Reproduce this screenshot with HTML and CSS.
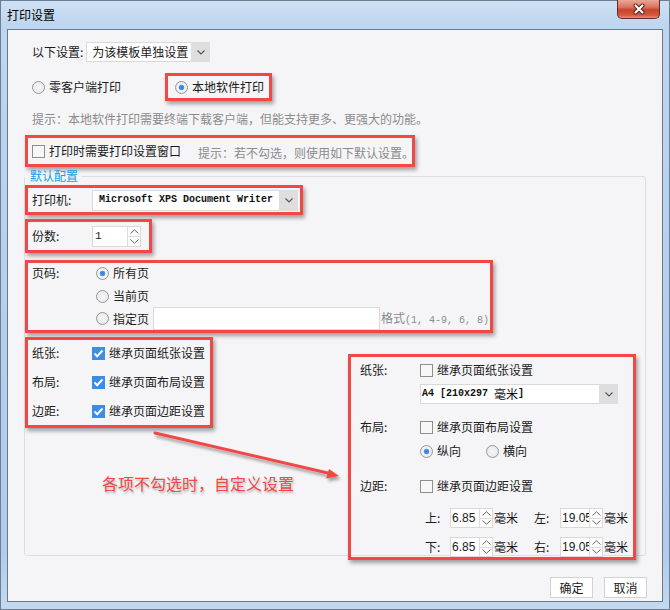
FILE: index.html
```html
<!DOCTYPE html>
<html>
<head>
	<meta charset="UTF-8">
	<meta name="viewport" content="width=device-width, initial-scale=1">
	<title>打印设置</title>
	<link rel="stylesheet" href="styles.css">
</head>
<body>

	<div class="window">
		<div class="titlebar">
			<span class="title">打印设置</span>
			<span class="close">
				<svg width="14" height="12" viewBox="0 0 14 12"><path d="M3.5 2.5 L10.5 9.5 M10.5 2.5 L3.5 9.5" stroke="#4a1c17" stroke-width="4" stroke-linecap="round"/><path d="M3.5 2.5 L10.5 9.5 M10.5 2.5 L3.5 9.5" stroke="#fff" stroke-width="2.2" stroke-linecap="round"/></svg>
			</span>
		</div>

		<div class="client">
			<!-- scope -->
			<div class="row-scope">
				<span class="lbl">以下设置:</span>
				<span class="select select-scope">
					<span class="select-text">为该模板单独设置</span>
					<span class="select-arrow"><svg width="8" height="5" viewBox="0 0 8 5"><polyline points="0.5,0.5 4,4 7.5,0.5" fill="none" stroke="#555" stroke-width="1.1"/></svg></span>
				</span>
			</div>

			<!-- print mode -->
			<div class="row-mode">
				<span class="opt"><span class="radio"></span>零客户端打印</span>
				<span class="mark mark-local"><span class="opt"><span class="radio on"></span>本地软件打印</span></span>
			</div>
			<p class="hint hint-mode">提示：本地软件打印需要终端下载客户端，但能支持更多、更强大的功能。</p>

			<div class="mark mark-dialog">
				<span class="opt"><span class="check"></span>打印时需要打印设置窗口</span>
				<span class="hint hint-dialog">提示：若不勾选，则使用如下默认设置。</span>
			</div>

			<!-- defaults -->
			<fieldset class="defaults">
				<legend>默认配置</legend>

				<div class="mark mark-printer">
					<span class="field-lbl">打印机:</span>
					<span class="select select-printer">
						<span class="select-text mono">Microsoft XPS Document Writer</span>
						<span class="select-arrow"><svg width="8" height="5" viewBox="0 0 8 5"><polyline points="0.5,0.5 4,4 7.5,0.5" fill="none" stroke="#555" stroke-width="1.1"/></svg></span>
					</span>
				</div>

				<div class="mark mark-copies">
					<span class="field-lbl">份数:</span>
					<span class="spin spin-copies">
						<span class="spin-text copies-val">1</span>
						<span class="spin-btns">
							<span class="spin-up"><svg width="9" height="5" viewBox="0 0 9 5"><polyline points="0.5,4.5 4.5,0.8 8.5,4.5" fill="none" stroke="#666" stroke-width="1"/></svg></span>
							<span class="spin-down"><svg width="9" height="5" viewBox="0 0 9 5"><polyline points="0.5,0.5 4.5,4.2 8.5,0.5" fill="none" stroke="#666" stroke-width="1"/></svg></span>
						</span>
					</span>
				</div>

				<div class="mark mark-pages">
					<span class="field-lbl pages-lbl">页码:</span>
					<div class="page-opts">
						<div class="page-row"><span class="radio on"></span>所有页</div>
						<div class="page-row row-current"><span class="radio"></span>当前页</div>
						<div class="page-row row-range">
							<span class="radio"></span>指定页
							<span class="range-input"></span>
							<span class="range-fmt">格式<span class="mono">(1, 4-9, 6, 8)</span></span>
						</div>
					</div>
				</div>

				<div class="lower">
					<div class="lower-left">
						<div class="mark mark-inherit">
							<div class="inherit-row"><span class="field-lbl">纸张:</span><span class="check on"><svg width="11" height="9" viewBox="0 0 11 9"><polyline points="1.5,4.5 4.2,7.2 9.5,1.5" fill="none" stroke="#fff" stroke-width="2"/></svg></span>继承页面纸张设置</div>
							<div class="inherit-row"><span class="field-lbl">布局:</span><span class="check on"><svg width="11" height="9" viewBox="0 0 11 9"><polyline points="1.5,4.5 4.2,7.2 9.5,1.5" fill="none" stroke="#fff" stroke-width="2"/></svg></span>继承页面布局设置</div>
							<div class="inherit-row"><span class="field-lbl">边距:</span><span class="check on"><svg width="11" height="9" viewBox="0 0 11 9"><polyline points="1.5,4.5 4.2,7.2 9.5,1.5" fill="none" stroke="#fff" stroke-width="2"/></svg></span>继承页面边距设置</div>
						</div>
						<p class="note">各项不勾选时，自定义设置</p>
					</div>

					<div class="mark mark-custom">
						<div class="custom-row"><span class="field-lbl">纸张:</span><span class="check"></span>继承页面纸张设置</div>
						<span class="select select-paper">
							<span class="select-text"><span class="mono">A4 [210x297&nbsp;</span>毫米<span class="mono">]</span></span>
							<span class="select-arrow"><svg width="8" height="5" viewBox="0 0 8 5"><polyline points="0.5,0.5 4,4 7.5,0.5" fill="none" stroke="#555" stroke-width="1.1"/></svg></span>
						</span>
						<div class="custom-row row-layout"><span class="field-lbl">布局:</span><span class="check"></span>继承页面布局设置</div>
						<div class="orient">
							<span class="opt"><span class="radio on"></span>纵向</span>
							<span class="opt opt-land"><span class="radio"></span>横向</span>
						</div>
						<div class="custom-row row-margin"><span class="field-lbl">边距:</span><span class="check"></span>继承页面边距设置</div>

						<div class="margin-row">
							<span class="m-lbl">上:</span>
							<span class="spin spin-m"><span class="spin-text">6.85</span><span class="spin-btns"><span class="spin-up"><svg width="9" height="5" viewBox="0 0 9 5"><polyline points="0.5,4.5 4.5,0.8 8.5,4.5" fill="none" stroke="#666" stroke-width="1"/></svg></span><span class="spin-down"><svg width="9" height="5" viewBox="0 0 9 5"><polyline points="0.5,0.5 4.5,4.2 8.5,0.5" fill="none" stroke="#666" stroke-width="1"/></svg></span></span></span>
							<span class="unit">毫米</span>
							<span class="m-lbl m-lbl-r">左:</span>
							<span class="spin spin-m"><span class="spin-text">19.05</span><span class="spin-btns"><span class="spin-up"><svg width="9" height="5" viewBox="0 0 9 5"><polyline points="0.5,4.5 4.5,0.8 8.5,4.5" fill="none" stroke="#666" stroke-width="1"/></svg></span><span class="spin-down"><svg width="9" height="5" viewBox="0 0 9 5"><polyline points="0.5,0.5 4.5,4.2 8.5,0.5" fill="none" stroke="#666" stroke-width="1"/></svg></span></span></span>
							<span class="unit">毫米</span>
						</div>
						<div class="margin-row row-bottom">
							<span class="m-lbl">下:</span>
							<span class="spin spin-m"><span class="spin-text">6.85</span><span class="spin-btns"><span class="spin-up"><svg width="9" height="5" viewBox="0 0 9 5"><polyline points="0.5,4.5 4.5,0.8 8.5,4.5" fill="none" stroke="#666" stroke-width="1"/></svg></span><span class="spin-down"><svg width="9" height="5" viewBox="0 0 9 5"><polyline points="0.5,0.5 4.5,4.2 8.5,0.5" fill="none" stroke="#666" stroke-width="1"/></svg></span></span></span>
							<span class="unit">毫米</span>
							<span class="m-lbl m-lbl-r">右:</span>
							<span class="spin spin-m"><span class="spin-text">19.05</span><span class="spin-btns"><span class="spin-up"><svg width="9" height="5" viewBox="0 0 9 5"><polyline points="0.5,4.5 4.5,0.8 8.5,4.5" fill="none" stroke="#666" stroke-width="1"/></svg></span><span class="spin-down"><svg width="9" height="5" viewBox="0 0 9 5"><polyline points="0.5,0.5 4.5,4.2 8.5,0.5" fill="none" stroke="#666" stroke-width="1"/></svg></span></span></span>
							<span class="unit">毫米</span>
						</div>
					</div>
				</div>
			</fieldset>

			<div class="actions">
				<button class="btn">确定</button>
				<button class="btn">取消</button>
			</div>
		</div>
	</div>

	<!-- annotation arrow -->
	<svg class="arrow" width="670" height="610" viewBox="0 0 670 610">
		<defs>
			<filter id="shadow" x="-10%" y="-50%" width="120%" height="200%">
				<feDropShadow dx="2" dy="3" stdDeviation="1.6" flood-color="#000" flood-opacity="0.35"/>
			</filter>
		</defs>
		<g filter="url(#shadow)">
			<line x1="155" y1="433" x2="330" y2="473.5" stroke="#f24747" stroke-width="3" stroke-linecap="round"/>
			<polygon points="339,476 326,478.5 329,469" fill="#f24747"/>
		</g>
	</svg>

</body>
</html>
```

FILE: styles.css
```css
body {
	margin: 0;
	width: 670px;
	height: 610px;
	overflow: hidden;
	position: relative;
	font-family: "Noto Sans CJK SC", "Liberation Sans", sans-serif;
	font-size: 12px;
	line-height: 16px;
	white-space: nowrap;
	color: #1b1b1b;
	background: #b9d1ec;
}
p {
	margin: 0;
}
.mono {
	font-family: "Liberation Mono", monospace;
	font-size: 10px;
}

/* WINDOW FRAME */
.window {
	box-sizing: border-box;
	height: 610px;
	padding: 0 7px 8px 7px;
	background: linear-gradient(to bottom, #cfe1f3 0%, #bed6ef 4%, #b6cfeb 50%, #b1cbe9 90%, #c3d9f0 100%);
	box-shadow: inset 0 0 0 1px #6c7e94;
}
.titlebar {
	height: 29px;
	display: flex;
	justify-content: space-between;
	align-items: flex-start;
}
.title {
	padding-top: 7px;
	color: #000;
}
.close {
	width: 43px;
	height: 19px;
	margin-right: 3px;
	box-sizing: border-box;
	display: flex;
	align-items: center;
	justify-content: center;
	border: 1px solid #6b2b22;
	border-top: none;
	border-radius: 0 0 5px 5px;
	background: linear-gradient(to bottom, #e9a899 0%, #d9735f 40%, #c8432c 55%, #d45b3f 85%, #e4907a 100%);
}

/* Client area */
.client {
	box-sizing: border-box;
	height: 573px;
	padding: 0 16px;
	border: 1px solid #6a7a8d;
	background: #f5f5f7;
}

/* RED ANNOTATION BOXES */
.mark {
	box-sizing: border-box;
	border: 3px solid #f24747;
	box-shadow: 2px 3px 4px rgba(0,0,0,0.35);
}

/* common controls */
.opt {
	display: flex;
	align-items: center;
	flex: none;
}
.radio {
	box-sizing: border-box;
	width: 13px;
	height: 13px;
	flex: none;
	margin-right: 4px;
	border: 1px solid #979797;
	border-radius: 50%;
	background: radial-gradient(circle, #f7f7f7 0%, #e4e4e4 100%);
}
.radio.on {
	background: radial-gradient(circle, #2b7fe3 0, #4b95ea 2.4px, #f4f4f4 3.2px, #e4e4e4 100%);
}
.check {
	box-sizing: border-box;
	width: 13px;
	height: 13px;
	flex: none;
	margin-right: 4px;
	border: 1px solid #8f8f8f;
	background: #f7f7f7;
	display: flex;
	align-items: center;
	justify-content: center;
}
.check.on {
	border-color: #3b8de6;
	background: #3b8de6;
}
.select {
	box-sizing: border-box;
	display: flex;
	background: #fff;
	border: 1px solid #d9d9d9;
}
.select-text {
	flex: 1;
	display: flex;
	align-items: center;
	padding-left: 5px;
	overflow: hidden;
}
.select-arrow {
	width: 19px;
	display: flex;
	align-items: center;
	justify-content: center;
	background: #dedede;
	margin: -1px -1px -1px 0;
}
.spin {
	box-sizing: border-box;
	display: flex;
	background: #fff;
	border: 1px solid #d9d9d9;
}
.spin-text {
	flex: 1;
	display: flex;
	align-items: center;
	padding-left: 2px;
	overflow: hidden;
}
.spin-btns {
	width: 12px;
	display: flex;
	flex-direction: column;
	border-left: 1px solid #dcdcdc;
}
.spin-up, .spin-down {
	flex: 1;
	display: flex;
	align-items: center;
	justify-content: center;
}
.spin-up {
	border-bottom: 1px solid #dcdcdc;
}
.hint {
	color: #8b8b8b;
}
.field-lbl {
	width: 60px;
	flex: none;
}

/* Top section */
.row-scope {
	height: 20px;
	margin: 12px 0 0 8px;
	display: flex;
	align-items: center;
}
.lbl {
	margin-right: 3px;
}
.select-scope {
	width: 124px;
	height: 20px;
}
.row-mode {
	height: 28px;
	margin: 11px 0 0 8px;
	display: flex;
	align-items: center;
}
.mark-local {
	height: 28px;
	margin-left: 44px;
	padding: 0 5px 0 7px;
	display: flex;
	align-items: center;
}
.hint-mode {
	margin: 10px 0 0 8px;
}
.mark-dialog {
	width: 390px;
	height: 32px;
	margin: 8px 0 0 1px;
	padding-left: 4px;
	display: flex;
	align-items: center;
}
.hint-dialog {
	flex: none;
	align-self: flex-end;
	margin: 0 0 3px 17px;
}

/* Defaults fieldset */
.defaults {
	box-sizing: border-box;
	height: 388px;
	min-width: 0;
	margin: 1px 0 0 0;
	padding: 1px 0 0 0;
	border: 1px solid #dddee2;
	border-radius: 3px;
}
.defaults legend {
	padding: 0 4px 0 5px;
	line-height: 16px;
	color: #1a9be4;
}
.mark-printer {
	width: 278px;
	height: 30px;
	padding-left: 4px;
	display: flex;
	align-items: center;
}
.select-printer {
	width: 206px;
	height: 21px;
}
.select-printer .mono {
	font-weight: bold;
	color: #101010;
	padding-left: 6px;
}
.mark-copies {
	width: 127px;
	height: 34px;
	margin-top: 4px;
	padding-left: 4px;
	display: flex;
	align-items: center;
}
.spin-copies {
	width: 49px;
	height: 21px;
}
.copies-val {
	font-family: "Liberation Mono", monospace;
	font-size: 11px;
	padding-left: 2px;
}
.mark-pages {
	width: 468px;
	height: 73px;
	margin-top: 7px;
	padding-left: 4px;
	display: flex;
	align-items: flex-start;
}
.pages-lbl {
	line-height: 20px;
}
.page-row {
	height: 20px;
	display: flex;
	align-items: center;
}
.page-row .radio {
	margin-left: 4px;
}
.row-current {
	margin-top: 3px;
}
.row-range {
	height: 23px;
	margin-top: 1px;
}
.range-input {
	box-sizing: border-box;
	width: 227px;
	height: 23px;
	margin-left: 4px;
	background: #fff;
	border: 1px solid #dadada;
}
.range-fmt {
	align-self: flex-end;
	margin-left: 1px;
	line-height: 18px;
	color: #8b8b8b;
}

/* Lower section */
.lower {
	margin-top: 4px;
	display: flex;
	align-items: flex-start;
}
.lower-left {
	width: 323px;
	flex: none;
}
.mark-inherit {
	width: 188px;
	height: 91px;
	padding: 3px 0 0 4px;
}
.inherit-row {
	height: 20px;
	display: flex;
	align-items: center;
	margin-bottom: 9px;
}
.note {
	margin: 46px 0 0 77px;
	font-size: 16px;
	line-height: 18px;
	color: #f24747;
	text-shadow: 1px 2px 2px rgba(0,0,0,0.25);
}
.mark-custom {
	width: 288px;
	height: 206px;
	margin-top: 17px;
	padding: 3px 0 0 9px;
}
.custom-row {
	height: 20px;
	display: flex;
	align-items: center;
}
.select-paper {
	width: 198px;
	height: 20px;
	margin: 4px 0 0 60px;
}
.select-paper .select-text {
	padding-left: 1px;
	color: #101010;
}
.select-paper .mono {
	font-weight: bold;
}
.row-layout {
	margin-top: 13px;
}
.orient {
	height: 20px;
	margin: 4px 0 0 60px;
	display: flex;
	align-items: center;
}
.opt-land {
	margin-left: 25px;
}
.row-margin {
	margin-top: 15px;
}
.margin-row {
	height: 20px;
	margin-top: 12px;
	padding-left: 65px;
	display: flex;
	align-items: center;
}
.row-bottom {
	margin-top: 9px;
}
.m-lbl {
	width: 25px;
	flex: none;
}
.m-lbl-r {
	width: 26px;
	margin-left: 16px;
}
.spin-m {
	width: 43px;
	height: 20px;
}
.spin-m .spin-text {
	font-family: "Liberation Sans", sans-serif;
	padding-left: 1px;
}
.unit {
	margin-left: 1px;
}

/* Buttons */
.actions {
	margin: 21px -1px 0 0;
	display: flex;
	justify-content: flex-end;
	gap: 11px;
}
.btn {
	box-sizing: border-box;
	width: 43px;
	height: 21px;
	padding: 0;
	font-family: "Noto Sans CJK SC", sans-serif;
	font-size: 12px;
	color: #1b1b1b;
	background: #fff;
	border: 1px solid #d2d2d2;
}

/* arrow overlay */
.arrow {
	position: absolute;
	left: 0;
	top: 0;
	pointer-events: none;
}
```
